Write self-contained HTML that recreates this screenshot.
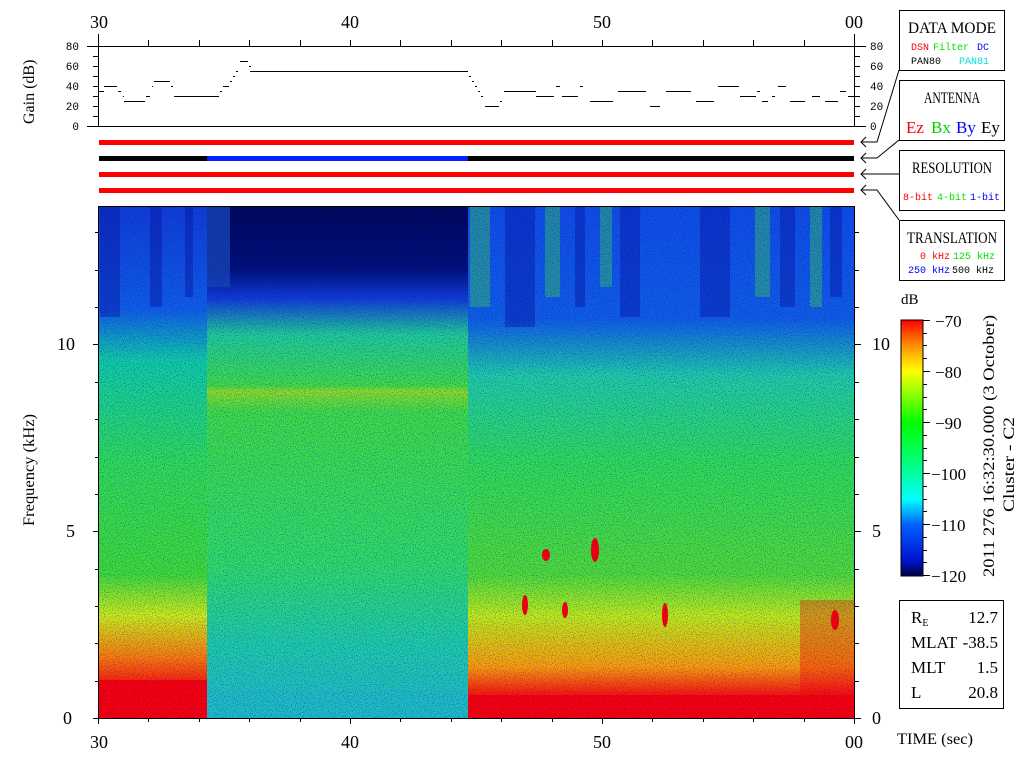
<!DOCTYPE html>
<html><head><meta charset="utf-8"><style>
body{margin:0;background:#fff;width:1024px;height:768px;overflow:hidden}
svg{display:block}
text{font-family:"Liberation Mono","DejaVu Sans Mono",monospace}
.s{font-family:"Liberation Serif",serif}
</style></head><body>
<svg width="1024" height="768" viewBox="0 0 1024 768" xmlns="http://www.w3.org/2000/svg">
<defs>
<linearGradient id="cb" x1="0" y1="1" x2="0" y2="0">
<stop offset="0" stop-color="#000040"/><stop offset="0.06" stop-color="#0010d0"/><stop offset="0.2" stop-color="#0060ff"/><stop offset="0.3" stop-color="#00ffff"/><stop offset="0.42" stop-color="#00ff90"/><stop offset="0.6" stop-color="#00ff00"/><stop offset="0.8" stop-color="#ffff00"/><stop offset="0.9" stop-color="#ff9000"/><stop offset="1" stop-color="#ff0000"/>
</linearGradient>
<linearGradient id="gl" x1="0" y1="0" x2="0" y2="1">
<stop offset="0" stop-color="#1040d0"/><stop offset="0.2" stop-color="#1060e0"/><stop offset="0.3" stop-color="#10d0a0"/><stop offset="0.5" stop-color="#30e050"/><stop offset="0.72" stop-color="#40e030"/><stop offset="0.8" stop-color="#d0f010"/><stop offset="0.88" stop-color="#ff8000"/><stop offset="0.94" stop-color="#ff1000"/><stop offset="1" stop-color="#ff0000"/>
</linearGradient>
<linearGradient id="gm" x1="0" y1="0" x2="0" y2="1">
<stop offset="0" stop-color="#000850"/><stop offset="0.12" stop-color="#001070"/><stop offset="0.18" stop-color="#1040d0"/><stop offset="0.25" stop-color="#20d090"/><stop offset="0.35" stop-color="#40e040"/><stop offset="0.36" stop-color="#90e020"/><stop offset="0.4" stop-color="#40e040"/><stop offset="0.7" stop-color="#30e060"/><stop offset="0.85" stop-color="#20d0a0"/><stop offset="1" stop-color="#20c0c0"/>
</linearGradient>
<linearGradient id="gr" x1="0" y1="0" x2="0" y2="1">
<stop offset="0" stop-color="#1050e0"/><stop offset="0.22" stop-color="#1060e0"/><stop offset="0.33" stop-color="#20d0a0"/><stop offset="0.5" stop-color="#30e050"/><stop offset="0.72" stop-color="#50e030"/><stop offset="0.8" stop-color="#c0f010"/><stop offset="0.9" stop-color="#ffa000"/><stop offset="0.95" stop-color="#ff2000"/><stop offset="1" stop-color="#ff0000"/>
</linearGradient>
<filter id="nz" filterUnits="userSpaceOnUse" x="99" y="207" width="755" height="511"><feTurbulence type="fractalNoise" baseFrequency="0.9" numOctaves="1" seed="3"/><feColorMatrix values="0 0 0 0 0  0 0 0 0 0  0 0 0 0 0.7  0 0 0 1.4 -0.65"/></filter>
<clipPath id="cp"><rect x="99" y="207" width="755" height="511"/></clipPath>
</defs>

<g font-size="18" text-anchor="middle" fill="#000">
<text class="s" x="99" y="28">30</text><text class="s" x="350" y="28">40</text><text class="s" x="602" y="28">50</text><text class="s" x="854" y="28">00</text>
</g>
<g stroke="#000" stroke-width="1" fill="none">
<line x1="87" y1="46.5" x2="866" y2="46.5"/>
<line x1="87" y1="126.5" x2="866" y2="126.5"/>
<line x1="98.5" y1="34" x2="98.5" y2="126"/>
<line x1="854.5" y1="34" x2="854.5" y2="126"/>
<path d="M148.5 40V46M199.5 40V46M249.5 40V46M300.5 40V46M350.5 40V46M400.5 40V46M451.5 40V46M501.5 40V46M552.5 40V46M602.5 40V46M652.5 40V46M703.5 40V46M753.5 40V46M804.5 40V46"/>
<path d="M93 56.5H98M93 66.5H98M93 76.5H98M93 86.5H98M93 96.5H98M93 106.5H98M93 116.5H98M855 56.5H860M855 66.5H860M855 76.5H860M855 86.5H860M855 96.5H860M855 106.5H860M855 116.5H860"/>
</g>
<g font-size="11" fill="#000" text-anchor="end">
<text x="79" y="50">80</text><text x="79" y="70">60</text><text x="79" y="90">40</text><text x="79" y="110">20</text><text x="79" y="130">0</text>
</g>
<g font-size="11" fill="#000">
<text x="870" y="50">80</text><text x="870" y="70">60</text><text x="870" y="90">40</text><text x="870" y="110">20</text><text x="870" y="130">0</text>
</g>
<text class="s" font-size="16" transform="translate(34,124) rotate(-90)">Gain (dB)</text>
<g stroke="#000" stroke-width="1">
<path d="M99 91.5H104M104 86.5H117M118 91.5H121M123 96.5H124M124 101.5H145M146 96.5H150M152 86.5H153M154 81.5H170M171 86.5H173M174 96.5H219M220 91.5H222M223 86.5H229M230 81.5H232M233 76.5H235M236 71.5H238M240 61.5H248M249 66.5H251M250 71.5H468M469 76.5H471M472 81.5H474M475 86.5H477M478 91.5H480M481 96.5H483M485 106.5H499M500 101.5H502M504 91.5H536M536 96.5H554M556 86.5H560M562 96.5H578M580 86.5H583M590 101.5H613M618 91.5H646M650 106.5H660M666 91.5H691M696 101.5H714M718 86.5H739M740 96.5H756M757 91.5H760M762 101.5H768M772 96.5H775M778 86.5H786M790 101.5H805M812 96.5H820M825 101.5H838M840 91.5H846M848 96.5H854"/>
</g>
<rect x="99" y="140" width="755" height="5" fill="#ff0000"/>
<rect x="99" y="156" width="755" height="5" fill="#000"/>
<rect x="207" y="156" width="261" height="5" fill="#0020ff"/>
<rect x="99" y="172" width="755" height="5" fill="#ff0000"/>
<rect x="99" y="188" width="755" height="5" fill="#ff0000"/>
<g stroke="#000" fill="none">
<path d="M899 70L877 142H861M866 137L861 142L866 147"/>
<path d="M899 140L877 158H861M866 153L861 158L866 163"/>
<path d="M899 174H861M866 169L861 174L866 179"/>
<path d="M899 220L877 190H861M866 185L861 190L866 195"/>
</g>
<g fill="#fff" stroke="#000">
<rect x="899.5" y="10.5" width="105" height="60"/>
<rect x="899.5" y="80.5" width="105" height="60"/>
<rect x="899.5" y="150.5" width="105" height="60"/>
<rect x="899.5" y="220.5" width="105" height="60"/>
</g>
<g font-size="16" text-anchor="middle" fill="#000">
<text class="s" x="952" y="33" textLength="88" lengthAdjust="spacingAndGlyphs">DATA MODE</text>
<text class="s" x="952" y="103" textLength="56" lengthAdjust="spacingAndGlyphs">ANTENNA</text>
<text class="s" x="952" y="173" textLength="80" lengthAdjust="spacingAndGlyphs">RESOLUTION</text>
<text class="s" x="952" y="243" textLength="90" lengthAdjust="spacingAndGlyphs">TRANSLATION</text>
</g>
<g font-size="10">
<text x="911" y="50" fill="#ff0000">DSN</text><text x="933" y="50" fill="#00e000">Filter</text><text x="977" y="50" fill="#0000ff">DC</text>
<text x="911" y="64" fill="#000">PAN80</text><text x="959" y="64" fill="#00e0e0">PAN81</text>
<text x="903" y="200" fill="#ff0000">8-bit</text><text x="937" y="200" fill="#00e000">4-bit</text><text x="970" y="200" fill="#0000ff">1-bit</text>
<text x="920" y="259" fill="#ff0000">0 kHz</text><text x="953" y="259" fill="#00e000">125 kHz</text>
<text x="908" y="273" fill="#0000ff">250 kHz</text><text x="952" y="273" fill="#000">500 kHz</text>
</g>
<g font-size="17">
<text class="s" x="906" y="133" fill="#ff0000">Ez</text><text class="s" x="931" y="133" fill="#00d000">Bx</text><text class="s" x="956" y="133" fill="#0000ff">By</text><text class="s" x="981" y="133" fill="#000">Ey</text>
</g>

<g clip-path="url(#cp)">
<rect x="99" y="207" width="108" height="511" fill="url(#gl)"/>
<rect x="207" y="207" width="261" height="511" fill="url(#gm)"/>
<rect x="468" y="207" width="386" height="511" fill="url(#gr)"/>
<rect x="207" y="207" width="23" height="80" fill="#1848b0" opacity="0.8"/>
<rect x="207" y="690" width="261" height="28" fill="#20c0c0" opacity="0.6"/>
<g fill="#0818a0" opacity="0.45">
<rect x="100" y="207" width="20" height="110"/><rect x="150" y="207" width="12" height="100"/><rect x="185" y="207" width="8" height="90"/>
<rect x="505" y="207" width="30" height="120"/><rect x="575" y="207" width="10" height="100"/><rect x="620" y="207" width="20" height="110"/>
<rect x="700" y="207" width="30" height="110"/><rect x="780" y="207" width="15" height="100"/><rect x="830" y="207" width="12" height="90"/>
</g>
<g fill="#40e040" opacity="0.4">
<rect x="470" y="207" width="20" height="100"/><rect x="545" y="207" width="15" height="90"/><rect x="600" y="207" width="12" height="80"/><rect x="755" y="207" width="15" height="90"/><rect x="810" y="207" width="12" height="100"/>
</g>
<g fill="#ff0000">
<rect x="99" y="680" width="108" height="38"/>
<rect x="468" y="695" width="386" height="23"/>
<rect x="800" y="600" width="54" height="100" opacity="0.35"/>
<ellipse cx="546" cy="555" rx="4" ry="6"/><ellipse cx="595" cy="550" rx="4" ry="12"/><ellipse cx="565" cy="610" rx="3" ry="8"/><ellipse cx="835" cy="620" rx="4" ry="10"/><ellipse cx="525" cy="605" rx="3" ry="10"/><ellipse cx="665" cy="615" rx="3" ry="12"/>
</g>
<rect x="99" y="207" width="755" height="511" filter="url(#nz)"/>
</g>
<g stroke="#000" fill="none">
<rect x="98.5" y="206.5" width="756" height="512"/>
<path d="M93 718.5H99M93 531.5H99M93 344.5H99M855 718.5H861M855 531.5H861M855 344.5H861"/>
<path d="M95 681.5H99M95 643.5H99M95 606.5H99M95 569.5H99M95 494.5H99M95 457.5H99M95 419.5H99M95 382.5H99M95 307.5H99M95 270.5H99M95 232.5H99"/>
<path d="M855 681.5H859M855 643.5H859M855 606.5H859M855 569.5H859M855 494.5H859M855 457.5H859M855 419.5H859M855 382.5H859M855 307.5H859M855 270.5H859M855 232.5H859"/>
<path d="M98.5 719V724M350.5 719V724M602.5 719V724M854.5 719V724M148.5 719V722M199.5 719V722M249.5 719V722M300.5 719V722M400.5 719V722M451.5 719V722M501.5 719V722M552.5 719V722M652.5 719V722M703.5 719V722M753.5 719V722M804.5 719V722"/>
</g>
<g font-size="18" fill="#000">
<text class="s" x="72" y="724" text-anchor="end">0</text><text class="s" x="75" y="537" text-anchor="end">5</text><text class="s" x="75" y="350" text-anchor="end">10</text>
<text class="s" x="872" y="724">0</text><text class="s" x="872" y="537">5</text><text class="s" x="872" y="350">10</text>
<text class="s" x="99" y="748" text-anchor="middle">30</text><text class="s" x="350" y="748" text-anchor="middle">40</text><text class="s" x="602" y="748" text-anchor="middle">50</text><text class="s" x="854" y="748" text-anchor="middle">00</text>
</g>
<text class="s" font-size="16" transform="translate(34,526) rotate(-90)" textLength="112" lengthAdjust="spacingAndGlyphs">Frequency (kHz)</text>
<text class="s" font-size="16" x="897" y="744" textLength="76" lengthAdjust="spacingAndGlyphs">TIME (sec)</text>

<text class="s" font-size="15" x="901" y="304">dB</text>
<rect x="901" y="320" width="22" height="256" fill="url(#cb)" stroke="#000"/>
<g stroke="#000">
<path d="M923 320.5H930M923 371.5H930M923 422.5H930M923 473.5H930M923 524.5H930M923 575.5H930"/>
<path d="M923 333.5H927M923 345.5H927M923 358.5H927M923 384.5H927M923 397.5H927M923 409.5H927M923 435.5H927M923 448.5H927M923 460.5H927M923 486.5H927M923 499.5H927M923 511.5H927M923 537.5H927M923 550.5H927M923 562.5H927"/>
</g>
<g font-size="17" fill="#000">
<text class="s" x="935" y="327">−70</text><text class="s" x="935" y="378">−80</text><text class="s" x="935" y="429">−90</text><text class="s" x="931" y="480">−100</text><text class="s" x="931" y="531">−110</text><text class="s" x="931" y="582">−120</text>
</g>
<text class="s" font-size="16" transform="translate(994,577) rotate(-90)" textLength="262" lengthAdjust="spacingAndGlyphs">2011 276 16:32:30.000 (3 October)</text>
<text class="s" font-size="16" transform="translate(1014,512) rotate(-90)" textLength="95" lengthAdjust="spacingAndGlyphs">Cluster - C2</text>

<rect x="899.5" y="600.5" width="104" height="108" fill="#fff" stroke="#000"/>
<g font-size="17" fill="#000">
<text class="s" x="911" y="623">R<tspan font-size="10" dy="3">E</tspan></text><text class="s" x="998" y="623" text-anchor="end">12.7</text>
<text class="s" x="911" y="648">MLAT</text><text class="s" x="998" y="648" text-anchor="end">-38.5</text>
<text class="s" x="911" y="673">MLT</text><text class="s" x="998" y="673" text-anchor="end">1.5</text>
<text class="s" x="911" y="698">L</text><text class="s" x="998" y="698" text-anchor="end">20.8</text>
</g>
</svg>
</body></html>
